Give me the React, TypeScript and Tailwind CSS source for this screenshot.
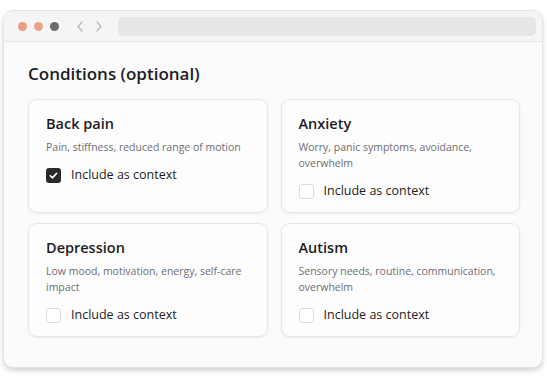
import React from "react";

const font = { fontFamily: '"Open Sans", "Noto Sans", sans-serif' };

function Check({ checked }: { checked: boolean }) {
  if (checked) {
    return (
      <span className="flex h-[15px] w-[15px] items-center justify-center rounded-[3px] bg-[#2a2a2c]">
        <svg width="11" height="11" viewBox="0 0 12 12" fill="none">
          <path d="M2.5 6.3l2.3 2.3 4.7-5" stroke="#fff" strokeWidth="1.8" strokeLinecap="round" strokeLinejoin="round" />
        </svg>
      </span>
    );
  }
  return <span className="block h-[15px] w-[15px] rounded-[3px] border border-[#dcdcde] bg-white" />;
}

function Card({ title, desc, checked }: { title: string; desc: string; checked: boolean }) {
  return (
    <div className="flex flex-col rounded-[9px] border border-[#e6e6e8] bg-[#fdfdfd] px-[17px] pt-[14px] pb-[11px] shadow-[0_1px_3px_rgba(0,0,0,0.06)]">
      <div className="text-[14.5px] font-semibold leading-[20px] text-[#1d1d1f]">{title}</div>
      <div className="mt-[5px] text-[10.5px] leading-[16px] text-[#6e6e73]">{desc}</div>
      <div className="mt-[10px] flex items-center gap-[10px]">
        <Check checked={checked} />
        <span className="text-[12.5px] leading-[20px] text-[#1d1d1f]">Include as context</span>
      </div>
    </div>
  );
}

export default function App() {
  return (
    <div className="h-[384px] w-[547px] bg-white pt-[10px] pl-[3px]" style={font}>
      <div className="flex h-[358px] w-[540px] flex-col overflow-hidden rounded-[10px] border border-[#e3e3e5] bg-[#fbfbfb] shadow-[0_3px_5px_rgba(0,0,0,0.16)]">
        <div className="flex h-[31px] shrink-0 items-center border-b border-[#e6e6e8] bg-[#f5f5f6] pl-[14px] pr-[6px]">
          <div className="flex items-center gap-[7px]">
            <span className="h-[9px] w-[9px] rounded-full bg-[#ec9d7e]" />
            <span className="h-[9px] w-[9px] rounded-full bg-[#eaa584]" />
            <span className="h-[9px] w-[9px] rounded-full bg-[#6b6b6d]" />
          </div>
          <div className="ml-[17px] flex items-center gap-[11px]">
            <svg width="8" height="11" viewBox="0 0 8 11" fill="none">
              <path d="M6 1L2 5.5 6 10" stroke="#b8b8bc" strokeWidth="1.3" strokeLinecap="round" strokeLinejoin="round" />
            </svg>
            <svg width="8" height="11" viewBox="0 0 8 11" fill="none">
              <path d="M2 1l4 4.5L2 10" stroke="#b8b8bc" strokeWidth="1.3" strokeLinecap="round" strokeLinejoin="round" />
            </svg>
          </div>
          <div className="ml-[15px] h-[19px] flex-1 rounded-[5px] bg-[#e7e7e9]" />
        </div>
        <div className="flex-1 px-[24px] pt-[20px]">
          <h1 className="text-[17px] font-semibold leading-[24px] text-[#1d1d1f]">Conditions (optional)</h1>
          <div className="mt-[13px] grid w-[492px] grid-cols-2 gap-x-[13px] gap-y-[10px]">
            <Card title="Back pain" desc="Pain, stiffness, reduced range of motion" checked />
            <Card title="Anxiety" desc="Worry, panic symptoms, avoidance, overwhelm" checked={false} />
            <Card title="Depression" desc="Low mood, motivation, energy, self-care impact" checked={false} />
            <Card title="Autism" desc="Sensory needs, routine, communication, overwhelm" checked={false} />
          </div>
        </div>
      </div>
    </div>
  );
}
